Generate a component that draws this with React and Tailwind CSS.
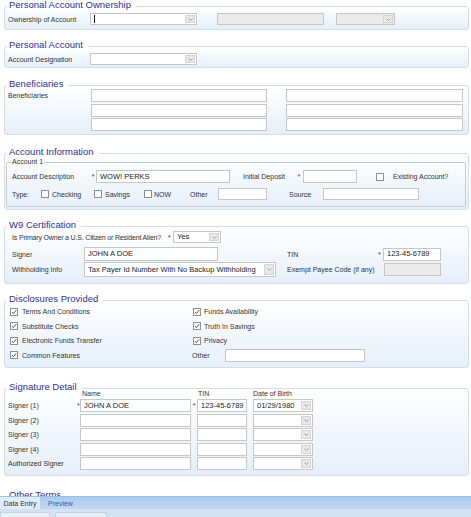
import React from "react";

function Chevron() {
  return (
    <svg width="5" height="3" viewBox="0 0 5 3">
      <path d="M0.5 0.5 L2.5 2.5 L4.5 0.5" fill="none" stroke="#8a8a8a" strokeWidth="0.8" />
    </svg>
  );
}

function Select({ w, h = "h-[13px]", value, disabled, cursor }) {
  return (
    <div className={`flex shrink-0 items-stretch border border-[#c6c6c6] ${h} ${w} ${disabled ? "bg-[#ebebeb]" : "bg-white"}`}>
      <div className="flex flex-1 items-center overflow-hidden whitespace-nowrap px-[3px] text-[7.5px] leading-none text-[#222]">
        {cursor && <span className="h-[8px] w-px bg-[#111]" />}
        {value}
      </div>
      <div className="m-px flex w-[10px] items-center justify-center border border-[#d4d4d4] bg-[#e8e8e8]">
        <Chevron />
      </div>
    </div>
  );
}

function Input({ w, h = "h-[13px]", value, disabled }) {
  return (
    <div className={`flex shrink-0 items-center overflow-hidden whitespace-nowrap border border-[#c6c6c6] px-[3px] text-[7.5px] leading-none text-[#222] ${h} ${w} ${disabled ? "bg-[#ebebeb]" : "bg-white"}`}>
      {value}
    </div>
  );
}

function Check({ checked }) {
  return (
    <div className="flex h-[8px] w-[8px] shrink-0 items-center justify-center border border-[#8e8e8e] bg-white">
      {checked && (
        <svg width="6" height="6" viewBox="0 0 6 6">
          <path d="M0.8 3 L2.4 4.6 L5.2 1.2" fill="none" stroke="#3a3a3a" strokeWidth="0.9" />
        </svg>
      )}
    </div>
  );
}

function Label({ w = "", children, className = "" }) {
  return <span className={`shrink-0 whitespace-nowrap text-[7px] leading-none text-[#333] ${w} ${className}`}>{children}</span>;
}

function Section({ title, className = "", children }) {
  return (
    <fieldset className={`ml-[4px] mr-[2px] min-w-0 rounded-[3px] border border-[#d3dde8] bg-linear-to-b from-white to-[#e6eff9] p-0 ${className}`}>
      <legend className="ml-[2px] pb-[2px] pl-[2px] pr-[5px] text-[9.5px] leading-[12px] text-[#2f2f8c]">{title}</legend>
      {children}
    </fieldset>
  );
}

export default function App() {
  const signers = ["Signer (1)", "Signer (2)", "Signer (3)", "Signer (4)", "Authorized Signer"];
  return (
    <div className="flex h-[517px] w-[471px] flex-col overflow-hidden bg-white font-['Liberation_Sans',Arial,sans-serif]">
      <div className="min-h-0 flex-1 overflow-hidden">
        <div className="mt-[-1px]">
          <Section title="Personal Account Ownership">
            <div className="flex items-center pb-[4px] pl-[3px]">
              <Label w="w-[82px]">Ownership of Account</Label>
              <Select w="w-[107px]" h="h-[12px]" cursor />
              <div className="ml-[20px]">
                <Input w="w-[107px]" h="h-[12px]" disabled />
              </div>
              <div className="ml-[12px]">
                <Select w="w-[59px]" h="h-[12px]" disabled />
              </div>
            </div>
          </Section>

          <Section title="Personal Account" className="mt-[9px]">
            <div className="flex items-center pb-[2px] pl-[3px]">
              <Label w="w-[82px]">Account Designation</Label>
              <Select w="w-[107px]" h="h-[12px]" />
            </div>
          </Section>

          <Section title="Beneficiaries" className="mt-[10px]">
            <div className="mt-[-3px] flex pb-[3px] pl-[3px]">
              <div className="flex h-[13px] w-[83px] items-center">
                <Label>Beneficiaries</Label>
              </div>
              <div className="flex flex-col gap-[1.5px]">
                <Input w="w-[176px]" />
                <Input w="w-[176px]" />
                <Input w="w-[176px]" />
              </div>
              <div className="ml-[19px] flex flex-col gap-[1.5px]">
                <Input w="w-[177px]" />
                <Input w="w-[177px]" />
                <Input w="w-[177px]" />
              </div>
            </div>
          </Section>

          <Section title="Account Information" className="mt-[11px]">
            <div className="pb-[2px]">
              <fieldset className="ml-px mr-[2px] mt-[-2px] min-w-0 rounded-[2px] border border-[#cacaca] p-0">
                <legend className="ml-[4px] px-px text-[7px] leading-[8px] text-[#333]">Account 1</legend>
                <div className="pb-[6px] pl-[5px] pt-[4px]">
                  <div className="flex h-[13px] items-center">
                    <Label w="w-[78px]">Account Description</Label>
                    <Label w="w-[6px]" className="text-center">*</Label>
                    <Input w="w-[134px]" value="WOW! PERKS" />
                    <Label w="w-[52px]" className="ml-[13px]">Initial Deposit</Label>
                    <span className="w-[8px] shrink-0 text-center text-[8px] leading-none text-[#e02020]">*</span>
                    <Input w="w-[54px]" />
                    <div className="ml-[19px]"><Check /></div>
                    <Label className="ml-[9px]">Existing Account?</Label>
                  </div>
                  <div className="mt-[5px] flex h-[12px] items-center">
                    <Label w="w-[29px]">Type:</Label>
                    <Check />
                    <Label w="w-[42px]" className="ml-[3px]">Checking</Label>
                    <Check />
                    <Label w="w-[39px]" className="ml-[3px]">Savings</Label>
                    <Check />
                    <Label w="w-[36px]" className="ml-[2px]">NOW</Label>
                    <Label w="w-[28px]">Other</Label>
                    <Input w="w-[49px]" h="h-[12px]" />
                    <Label w="w-[34px]" className="ml-[22px]">Source</Label>
                    <Input w="w-[96px]" h="h-[12px]" />
                  </div>
                </div>
              </fieldset>
            </div>
          </Section>

          <Section title="W9 Certification" className="mt-[9px]">
            <div className="mt-[-2px] pb-[6px] pl-[7px]">
              <div className="flex h-[12px] items-center">
                <Label w="w-[156px]" className="tracking-[-0.17px]">Is Primary Owner a U.S. Citizen or Resident Alien?</Label>
                <Label w="w-[5px]">*</Label>
                <Select w="w-[48px]" h="h-[12px]" value="Yes" />
              </div>
              <div className="mt-[4px] flex h-[14px] items-center">
                <Label w="w-[72px]">Signer</Label>
                <Input w="w-[134px]" h="h-[14px]" value="JOHN A DOE" />
                <Label w="w-[91px]" className="ml-[69px]">TIN</Label>
                <Label w="w-[5px]">*</Label>
                <Input w="w-[58px]" value="123-45-6789" />
              </div>
              <div className="mt-px flex h-[15px] items-center">
                <Label w="w-[72px]">Withholding Info</Label>
                <Select w="w-[192px]" h="h-[15px]" value="Tax Payer Id Number With No Backup Withholding" />
                <Label w="w-[97px]" className="ml-[11px]">Exempt Payee Code (if any)</Label>
                <Input w="w-[57px]" disabled />
              </div>
            </div>
          </Section>

          <Section title="Disclosures Provided" className="mt-[9px]">
            <div className="mt-[-2.5px] grid grid-cols-[183px_1fr] pb-[4.5px] pl-[5px]">
              {[
                ["Terms And Conditions", "Funds Availability"],
                ["Substitute Checks", "Truth In Savings"],
                ["Electronic Funds Transfer", "Privacy"],
              ].map(([a, b]) => (
                <React.Fragment key={a}>
                  <div className="flex h-[14.5px] items-center">
                    <Check checked />
                    <Label className="ml-[4px]">{a}</Label>
                  </div>
                  <div className="flex h-[14.5px] items-center">
                    <Check checked />
                    <Label className="ml-[3px]">{b}</Label>
                  </div>
                </React.Fragment>
              ))}
              <div className="flex h-[14.5px] items-center">
                <Check checked />
                <Label className="ml-[4px]">Common Features</Label>
              </div>
              <div className="flex h-[14.5px] items-center">
                <Label w="w-[33px]" className="ml-[-1px]">Other</Label>
                <Input w="w-[140px]" />
              </div>
            </div>
          </Section>

          <Section title="Signature Detail" className="mt-[13px]">
            <div className="mt-[-7px] pb-[5px]">
              <div className="flex h-[11px] items-center pl-[77px]">
                <Label w="w-[116px]">Name</Label>
                <Label w="w-[55px]">TIN</Label>
                <Label>Date of Birth</Label>
              </div>
              <div className="flex flex-col gap-[1.5px]">
                {signers.map((s, i) => (
                  <div key={s} className="flex h-[13px] items-center pl-[3px]">
                    <Label w="w-[69px]">{s}</Label>
                    <Label w="w-[3px]">{i === 0 ? "*" : ""}</Label>
                    <Input w="w-[111px]" value={i === 0 ? "JOHN A DOE" : ""} />
                    <Label w="w-[6px]" className="text-center">{i === 0 ? "*" : ""}</Label>
                    <Input w="w-[50px]" value={i === 0 ? "123-45-6789" : ""} />
                    <div className="ml-[6px]">
                      <Select w="w-[60px]" value={i === 0 ? "01/29/1980" : ""} />
                    </div>
                  </div>
                ))}
              </div>
            </div>
          </Section>

          <Section title="Other Terms" className="mt-[13px]">
            <div className="h-[40px]" />
          </Section>
        </div>
      </div>

      <div className="flex h-[13px] shrink-0 items-stretch border-t border-[#9dbfe4] bg-linear-to-b from-[#a9caed] to-[#c2d9f2]">
        <div className="flex w-[40px] items-center justify-center bg-[#e2edf8] text-[7px] leading-none text-[#333]">Data Entry</div>
        <div className="ml-[8px] flex items-center text-[7px] leading-none text-[#2d5fb4]">Preview</div>
      </div>
      <div className="flex h-[8px] shrink-0 items-end bg-[#d3e3f4]">
        <div className="h-[5px] w-[50px] border-x border-t border-[#c3d5e9] bg-[#e9f0f8]" />
        <div className="ml-[5px] h-[5px] w-[52px] border-x border-t border-[#c3d5e9] bg-[#e4edf7]" />
      </div>
    </div>
  );
}
